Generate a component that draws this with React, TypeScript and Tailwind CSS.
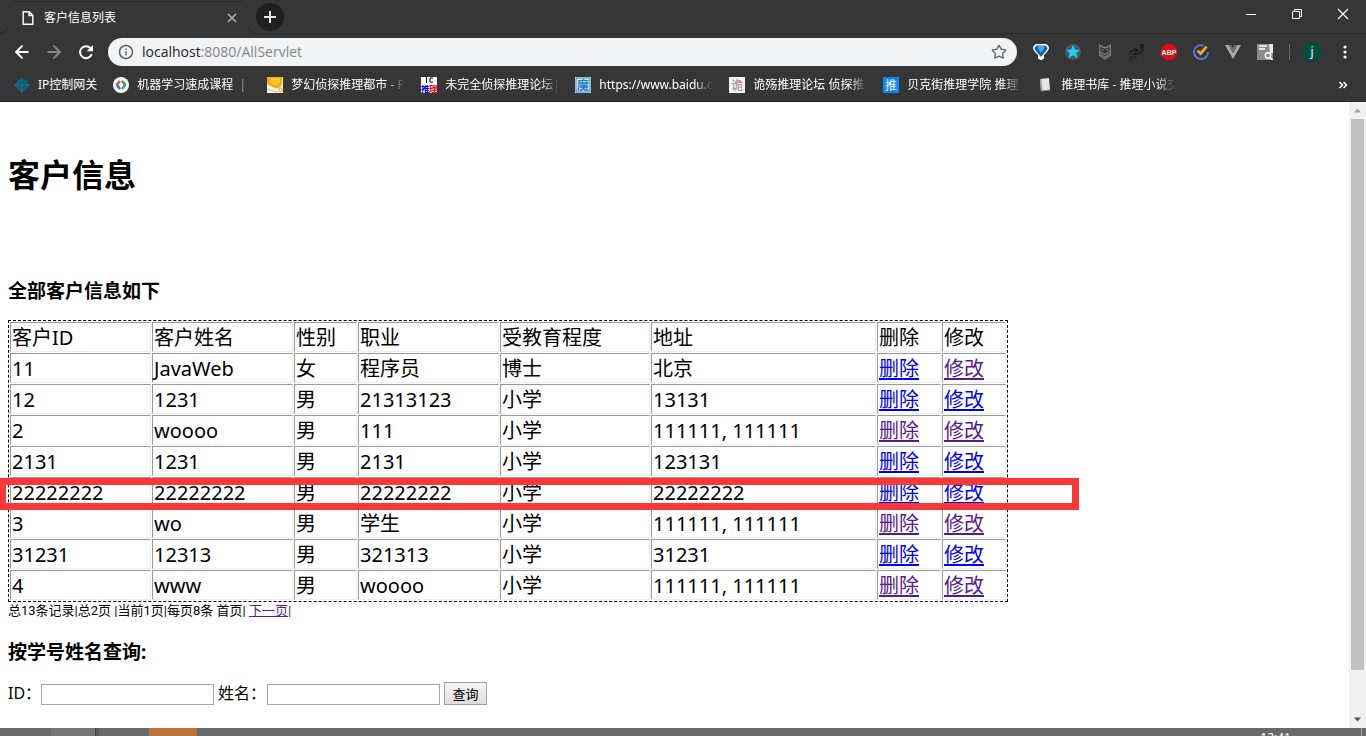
import React from "react";
import { ArrowLeft, ArrowRight, Star } from "lucide-react";

type Customer = {
  cells: string[];
  deleteVisited: boolean;
  editVisited: boolean;
};

const columns = [
  { title: "客户ID", width: "w-[141px]" },
  { title: "客户姓名", width: "w-[141px]" },
  { title: "性别", width: "w-[63px]" },
  { title: "职业", width: "w-[141px]" },
  { title: "受教育程度", width: "w-[150px]" },
  { title: "地址", width: "w-[225px]" },
  { title: "删除", width: "w-[64px]" },
  { title: "修改", width: "w-[64px]" },
];

const customers: Customer[] = [
  { cells: ["11", "JavaWeb", "女", "程序员", "博士", "北京"], deleteVisited: false, editVisited: true },
  { cells: ["12", "1231", "男", "21313123", "小学", "13131"], deleteVisited: false, editVisited: false },
  { cells: ["2", "woooo", "男", "111", "小学", "111111, 111111"], deleteVisited: true, editVisited: true },
  { cells: ["2131", "1231", "男", "2131", "小学", "123131"], deleteVisited: false, editVisited: false },
  { cells: ["22222222", "22222222", "男", "22222222", "小学", "22222222"], deleteVisited: false, editVisited: false },
  { cells: ["3", "wo", "男", "学生", "小学", "111111, 111111"], deleteVisited: true, editVisited: true },
  { cells: ["31231", "12313", "男", "321313", "小学", "31231"], deleteVisited: false, editVisited: false },
  { cells: ["4", "www", "男", "woooo", "小学", "111111, 111111"], deleteVisited: true, editVisited: true },
];

const cellClass =
  "h-[30px] border border-t-[#999] border-l-[#999] border-r-[#eee] border-b-[#eee] px-px pt-0.5 pb-0 text-left font-normal whitespace-nowrap";

function ActionLink({ visited, children }: { visited: boolean; children: React.ReactNode }) {
  return (
    <a
      href="#"
      className={
        visited
          ? "text-[#551a8b] underline decoration-2 underline-offset-2"
          : "text-[#0000ee] underline decoration-2 underline-offset-2"
      }
    >
      {children}
    </a>
  );
}

function TabStrip() {
  return (
    <div className="flex h-[34px] items-end">
      <span className="h-2 w-2 shrink-0 rounded-br-lg border-r border-b border-[#2a2a2a]" />
      <div className="flex h-[33px] w-[240px] shrink-0 items-center self-end rounded-t-lg border-t border-[#2a2a2a] pr-[10px] pb-px pl-3">
        <svg viewBox="0 0 16 16" className="h-4 w-4" fill="none" stroke="#fff" strokeWidth="1.4">
          <path d="M3.2 1.7h6l3.6 3.6v9H3.2z M9 1.7v3.8h3.8" />
        </svg>
        <span className="ml-2 flex-1 text-xs leading-4 text-white">客户信息列表</span>
        <button aria-label="关闭标签页" className="flex h-3 w-3 items-center justify-center">
          <svg viewBox="0 0 10 10" className="h-2.5 w-2.5" stroke="#b4b4b4" strokeWidth="1.5">
            <path d="M1 1l8 8M9 1l-8 8" />
          </svg>
        </button>
      </div>
      <span className="h-2 w-2 shrink-0 rounded-bl-lg border-b border-l border-[#2a2a2a]" />
      <div className="flex h-full flex-1 items-start border-b border-[#2a2a2a]">
        <button
          aria-label="新标签页"
          className="mt-[3px] flex h-7 w-7 items-center justify-center rounded-full bg-[#202020]"
        >
          <svg viewBox="0 0 12 12" className="h-3 w-3" stroke="#e6e6e6" strokeWidth="2">
            <path d="M6 0v12M0 6h12" />
          </svg>
        </button>
        <div className="ml-auto flex">
          <button aria-label="最小化" className="flex h-7 w-[46px] items-center justify-center">
            <svg viewBox="0 0 12 12" className="h-3 w-3" stroke="#fff">
              <path d="M1 6.5h10" />
            </svg>
          </button>
          <button aria-label="还原" className="flex h-7 w-[46px] items-center justify-center">
            <svg viewBox="0 0 12 12" className="h-3 w-3" stroke="#fff" fill="none">
              <path d="M1.5 3.5h7v7h-7z M3.5 3.5v-2h7v7h-2" />
            </svg>
          </button>
          <button aria-label="关闭" className="flex h-7 w-[46px] items-center justify-center">
            <svg viewBox="0 0 12 12" className="h-3 w-3" stroke="#fff" strokeWidth="1.1">
              <path d="M1 1l10 10M11 1L1 11" />
            </svg>
          </button>
        </div>
      </div>
    </div>
  );
}

function Extensions() {
  return (
    <div className="flex items-center gap-4">
      <svg viewBox="0 0 16 16" className="h-4 w-4">
        <path
          d="M4 0h8c2 0 4 2 4 4 0 2.500-3 5-5 7v3.500L8.500 16h-1L5 14.500V11C3 9 0 6.500 0 4c0-2 2-4 4-4z"
          fill="#fff"
        />
        <path d="M3.500 1.500h9l2 2.500c0 2-4 5.500-6.500 9C5.500 9.500 1.500 6 1.500 4z" fill="#1261ad" />
        <path d="M5 2h6c1 2-1.500 5-3 7-1.500-2-4-5-3-7z" fill="#45a5ee" />
      </svg>
      <svg viewBox="0 0 16 16" className="h-4 w-4">
        <circle cx="8" cy="8" r="8" fill="#505566" />
        <path d="M8 .8l2 5h5.2l-4.1 3.3 1.5 5.2L8 11.2l-4.6 3.1 1.5-5.2L.8 5.8H6z" fill="#12d6fb" />
      </svg>
      <svg viewBox="0 0 16 16" className="h-4 w-4" fill="none" stroke="#7d7d7d" strokeWidth="1.3">
        <path d="M2.700 1v10.500L8 15l5.300-3.500V1L10 3.500H6z" />
        <path d="M5 5.500l1.500 1M11 5.500l-1.500 1M3 7.500l5 3 5-3M3 10l5 3 5-3" />
      </svg>
      <svg viewBox="0 0 16 16" className="h-4 w-4" fill="none" stroke="#191919" strokeWidth="1.3">
        <path d="M1 9.500c1-3 4-4 7-3M3.500 10c5 1 8-.5 11-4M6 4.500l3 2-3 2M11 1h4M11 3.500h4M13 .500v5" />
        <text x="0" y="15.500" fill="#191919" stroke="none" fontSize="6.500" fontFamily="Noto Sans">en</text>
      </svg>
      <svg viewBox="0 0 16 16" className="h-4 w-4">
        <path d="M4.700 0h6.600L16 4.700v6.600L11.300 16H4.700L0 11.300V4.700z" fill="#e10b10" />
        <text x="8" y="10.600" textAnchor="middle" fill="#fff" fontSize="7" fontWeight="700" fontFamily="Liberation Sans">ABP</text>
      </svg>
      <svg viewBox="0 0 16 16" className="h-4 w-4" fill="none">
        <path d="M10.500 1.600A7 7 0 1 0 15 8" stroke="#4f79e6" strokeWidth="1.900" />
        <path d="M4.500 6.700l3.200 3 5.800-7" stroke="#fbb018" strokeWidth="2.600" />
      </svg>
      <svg viewBox="0 0 16 16" className="h-4 w-4">
        <path d="M0 1h3.500L8 9l4.500-8H16L8 15z" fill="#aaa" />
        <path d="M3.500 1h3L8 3.700 9.500 1h3L8 9z" fill="#707070" />
      </svg>
      <svg viewBox="0 0 16 16" className="h-4 w-4">
        <path d="M0 0h14v2h2v14H0z" fill="#8c8c8c" />
        <path d="M12 0h4v9h-3z" fill="#e8e8e8" />
        <path d="M2 2h8M2 5h6" stroke="#fff" strokeWidth="1.400" />
        <circle cx="11" cy="11.500" r="2.700" fill="none" stroke="#fff" strokeWidth="1.400" />
        <path d="M13 13.500l2.500 2.500" stroke="#fff" strokeWidth="1.400" />
      </svg>
    </div>
  );
}

function Toolbar() {
  return (
    <div className="flex h-9 items-center pr-[13px] pl-2">
      <div className="flex gap-1">
        <button aria-label="后退" className="flex h-7 w-7 items-center justify-center">
          <ArrowLeft className="h-5 w-5 text-white" strokeWidth={2.4} />
        </button>
        <button aria-label="前进" className="flex h-7 w-7 items-center justify-center">
          <ArrowRight className="h-5 w-5 text-[#868686]" strokeWidth={2.4} />
        </button>
        <button aria-label="重新加载" className="flex h-7 w-7 items-center justify-center">
          <svg viewBox="0 0 16 16" className="h-4 w-4">
            <path d="M13.700 10.200A6 6 0 1 1 12.400 4" fill="none" stroke="#fff" strokeWidth="2" />
            <path d="M15 1v6.300H8.700z" fill="#fff" />
          </svg>
        </button>
      </div>
      <div className="mr-4 ml-2 flex h-7 flex-1 items-center rounded-full bg-[#f1f3f4] pr-[10px] pl-[10px]">
        <svg viewBox="0 0 16 16" className="h-4 w-4 shrink-0" fill="none" stroke="#5f6368" strokeWidth="1.500">
          <circle cx="8" cy="8" r="6.500" />
          <path d="M8 7.200v4.300M8 4.500v1.600" />
        </svg>
        <span className="ml-2 flex-1 font-['Open_Sans',sans-serif] text-[14px] leading-5 text-[#80868b]">
          <span className="text-[#202124]">localhost</span>:8080/AllServlet
        </span>
        <button aria-label="为此网页添加书签">
          <Star className="h-4 w-4 text-[#5f6368]" strokeWidth={2} />
        </button>
      </div>
      <Extensions />
      <span className="ml-4 h-4 w-px bg-[#6b6b6b]" />
      <button className="ml-3 flex h-5 w-5 items-center justify-center rounded-full bg-[#004d40] text-xs leading-4 text-white">
        j
      </button>
      <button aria-label="菜单" className="ml-[15px]">
        <svg viewBox="0 0 16 16" className="h-4 w-4" fill="#fff">
          <circle cx="8" cy="3" r="1.600" />
          <circle cx="8" cy="8" r="1.600" />
          <circle cx="8" cy="13" r="1.600" />
        </svg>
      </button>
    </div>
  );
}

const iconText = "Noto Sans CJK SC, sans-serif";

const bookmarks = [
  {
    label: "IP控制网关",
    short: true,
    icon: (
      <>
        <path d="M8 0l8 8-8 8-8-8z" fill="#0d6384" />
        <path d="M4.500 4.500h7v7h-7z" fill="#12506b" />
        <path d="M8 1v14M1 8h14M4 4l8 8M12 4l-8 8" stroke="#2e7d96" strokeWidth=".6" />
      </>
    ),
  },
  {
    label: "机器学习速成课程  |",
    short: false,
    icon: (
      <>
        <circle cx="8" cy="8" r="8" fill="#fff" />
        <path d="M7 4L3.500 8" stroke="#f44336" strokeWidth="2.400" />
        <path d="M3.500 7.500L7 12" stroke="#1a73e8" strokeWidth="2.400" />
        <path d="M9 4l3.500 4" stroke="#0f9d58" strokeWidth="2.400" />
        <path d="M12.500 7.500L9 12" stroke="#34a853" strokeWidth="2.400" />
      </>
    ),
  },
  {
    label: "梦幻侦探推理都市 - P",
    short: false,
    icon: (
      <>
        <path d="M0 0h16v16H0z" fill="#fff3dc" />
        <path d="M0 0h15v6c0 4-5 7-9 4C3 8 0 9 0 5z" fill="#f4a915" />
        <path d="M4 1h9c1 5-2 8-6 7S3 4 4 1z" fill="#ffc52e" />
        <circle cx="13.500" cy="13" r="1.800" fill="none" stroke="#efa32a" />
        <path d="M0 12l10 3" stroke="#c9c0ae" />
      </>
    ),
  },
  {
    label: "未完全侦探推理论坛|侦",
    short: false,
    icon: (
      <>
        <path d="M0 0h16v16H0z" fill="#fff" />
        <path d="M5.500 0v6M12 1H9v4h3" stroke="#000" fill="none" />
        <text x="0" y="15" fontSize="8.500" fontWeight="700" fill="#0000ee" fontFamily={iconText}>推</text>
        <text x="8" y="15" fontSize="8.500" fontWeight="700" fill="#f00" fontFamily={iconText}>理</text>
      </>
    ),
  },
  {
    label: "https://www.baidu.c",
    short: false,
    icon: (
      <>
        <path d="M0 0h16v16H0z" fill="#d9edfa" />
        <path d="M1 1h14v14H1z" fill="none" stroke="#2d88c8" />
        <text x="2" y="12.500" fontSize="12" fontWeight="700" fill="#1c78bd" fontFamily={iconText}>魔</text>
      </>
    ),
  },
  {
    label: "诡殇推理论坛 侦探推",
    short: false,
    icon: (
      <>
        <path d="M0 0h16v16H0z" fill="#f5f1ee" />
        <text x="2" y="12.500" fontSize="12" fill="#8d8784" fontFamily={iconText}>诡</text>
        <path d="M8 3v5M6 5h7" stroke="#ee8f91" />
      </>
    ),
  },
  {
    label: "贝克街推理学院 推理",
    short: false,
    icon: (
      <>
        <rect width="16" height="16" rx="1" fill="#0b86f5" />
        <text x="2" y="12.500" fontSize="12" fill="#fff" fontFamily={iconText}>推</text>
      </>
    ),
  },
  {
    label: "推理书库 - 推理小说交",
    short: false,
    icon: (
      <>
        <path d="M3 2l9-1 1 12-9 1z" fill="#e9e6e1" />
        <path d="M3 2l1.500 0 1 11-1.500 1z" fill="#aaa39a" />
        <path d="M4 14l9-1" stroke="#8c857b" />
      </>
    ),
  },
];

function BookmarksBar() {
  return (
    <nav className="flex h-8 items-center border-b border-[#292929] pr-[18px] pb-px pl-[14px]">
      <div className="flex gap-4">
        {bookmarks.map((item) => (
          <a key={item.label} href="#" className="flex items-center gap-2">
            <svg viewBox="0 0 16 16" className="h-4 w-4 shrink-0">
              {item.icon}
            </svg>
            <span
              className={
                item.short
                  ? "text-xs leading-4 whitespace-nowrap text-white"
                  : "w-[114px] overflow-hidden text-xs leading-4 whitespace-pre text-white [mask-image:linear-gradient(to_right,black_84%,transparent)]"
              }
            >
              {item.label}
            </span>
          </a>
        ))}
      </div>
      <button aria-label="其他书签" className="ml-auto">
        <svg viewBox="0 0 10 8" className="h-2 w-[10px]" fill="none" stroke="#fff" strokeWidth="1.500">
          <path d="M1.500 1l3 3-3 3M5.500 1l3 3-3 3" />
        </svg>
      </button>
    </nav>
  );
}

function CustomerTable() {
  return (
    <div className="relative mt-4">
      <table className="w-[1000px] table-fixed border-separate border-spacing-px border border-dashed border-black text-xl leading-[26px]">
        <thead>
          <tr>
            {columns.map((column) => (
              <th key={column.title} scope="col" className={`${cellClass} ${column.width}`}>
                {column.title}
              </th>
            ))}
          </tr>
        </thead>
        <tbody>
          {customers.map((customer) => (
            <tr key={customer.cells[0]}>
              {customer.cells.map((value, index) => (
                <td key={columns[index].title} className={cellClass}>
                  {value}
                </td>
              ))}
              <td className={cellClass}>
                <ActionLink visited={customer.deleteVisited}>删除</ActionLink>
              </td>
              <td className={cellClass}>
                <ActionLink visited={customer.editVisited}>修改</ActionLink>
              </td>
            </tr>
          ))}
        </tbody>
      </table>
      <div className="pointer-events-none absolute top-[158px] -left-2 h-8 w-[1079px] border-[7px] border-l-[6px] border-[#fc3737]" />
    </div>
  );
}

function SearchForm() {
  const inputClass = "h-[21px] w-[173px] border border-[#a6a6a6] bg-white px-0.5 text-[13px]";
  return (
    <form className="mt-[17px] flex h-[23px] items-end gap-1" onSubmit={(event) => event.preventDefault()}>
      <label htmlFor="customer-id" className="w-[29px] leading-[23px] whitespace-nowrap">
        ID：
      </label>
      <input id="customer-id" type="text" className={inputClass} />
      <label htmlFor="customer-name" className="w-[45px] leading-[23px] whitespace-nowrap">
        姓名：
      </label>
      <input id="customer-name" type="text" className={inputClass} />
      <button
        type="submit"
        className="h-[23px] w-[43px] border border-[#a0a0a0] bg-linear-to-b from-[#f6f6f6] to-[#dddddd] text-[13px] leading-5"
      >
        查询
      </button>
    </form>
  );
}

function Scrollbar() {
  return (
    <div className="flex w-[17px] shrink-0 flex-col items-center bg-[#f1f1f1]">
      <svg viewBox="0 0 17 17" className="h-[17px] w-[17px] shrink-0">
        <path d="M5 10.500l3.500-4 3.500 4z" fill="#a3a3a3" />
      </svg>
      <div className="flex w-full flex-1 justify-center">
        <div className="h-[93%] w-[13px] bg-[#c1c1c1]" />
      </div>
      <svg viewBox="0 0 17 17" className="h-[17px] w-[17px] shrink-0">
        <path d="M5 6.500l3.500 4 3.500-4z" fill="#505050" />
      </svg>
    </div>
  );
}

function Taskbar() {
  return (
    <footer className="flex h-2 shrink-0 overflow-hidden bg-[#696969]">
      <span className="ml-[51px] w-11 bg-[#767676]" />
      <span className="w-px bg-[#444]" />
      <span className="w-[3px] bg-[#5b5b5b]" />
      <span className="ml-[50px] w-12 bg-[#bb713a]" />
      <span className="mt-[2px] mr-[70px] ml-auto text-xs leading-4 text-white">12:41</span>
      <span className="mr-1 w-px bg-[#a5a5a5]" />
    </footer>
  );
}

export default function App() {
  return (
    <div className="flex h-screen flex-col overflow-hidden bg-white font-['Noto_Sans','Noto_Sans_CJK_SC',sans-serif] text-black">
      <header className="shrink-0 bg-[#363636]">
        <TabStrip />
        <Toolbar />
        <BookmarksBar />
      </header>
      <div className="flex min-h-0 flex-1">
        <main className="min-w-0 flex-1 overflow-hidden pt-[52px] pl-2">
          <h1 className="text-[32px] leading-[42px] font-bold">客户信息</h1>
          <h3 className="mt-[83px] text-[19px] leading-[25px] font-bold">全部客户信息如下</h3>
          <CustomerTable />
          <p className="font-['Roboto','Noto_Sans_CJK_SC',sans-serif] text-[13px] leading-[18px]">
            总13条记录|总2页 |当前1页|每页8条 首页|{" "}
            <span className="text-[#551a8b]">
              <a href="#" className="underline">
                下一页
              </a>
              |
            </span>
          </p>
          <h3 className="mt-5 text-[19px] leading-[25px] font-bold">按学号姓名查询:</h3>
          <SearchForm />
        </main>
        <Scrollbar />
      </div>
      <Taskbar />
    </div>
  );
}
